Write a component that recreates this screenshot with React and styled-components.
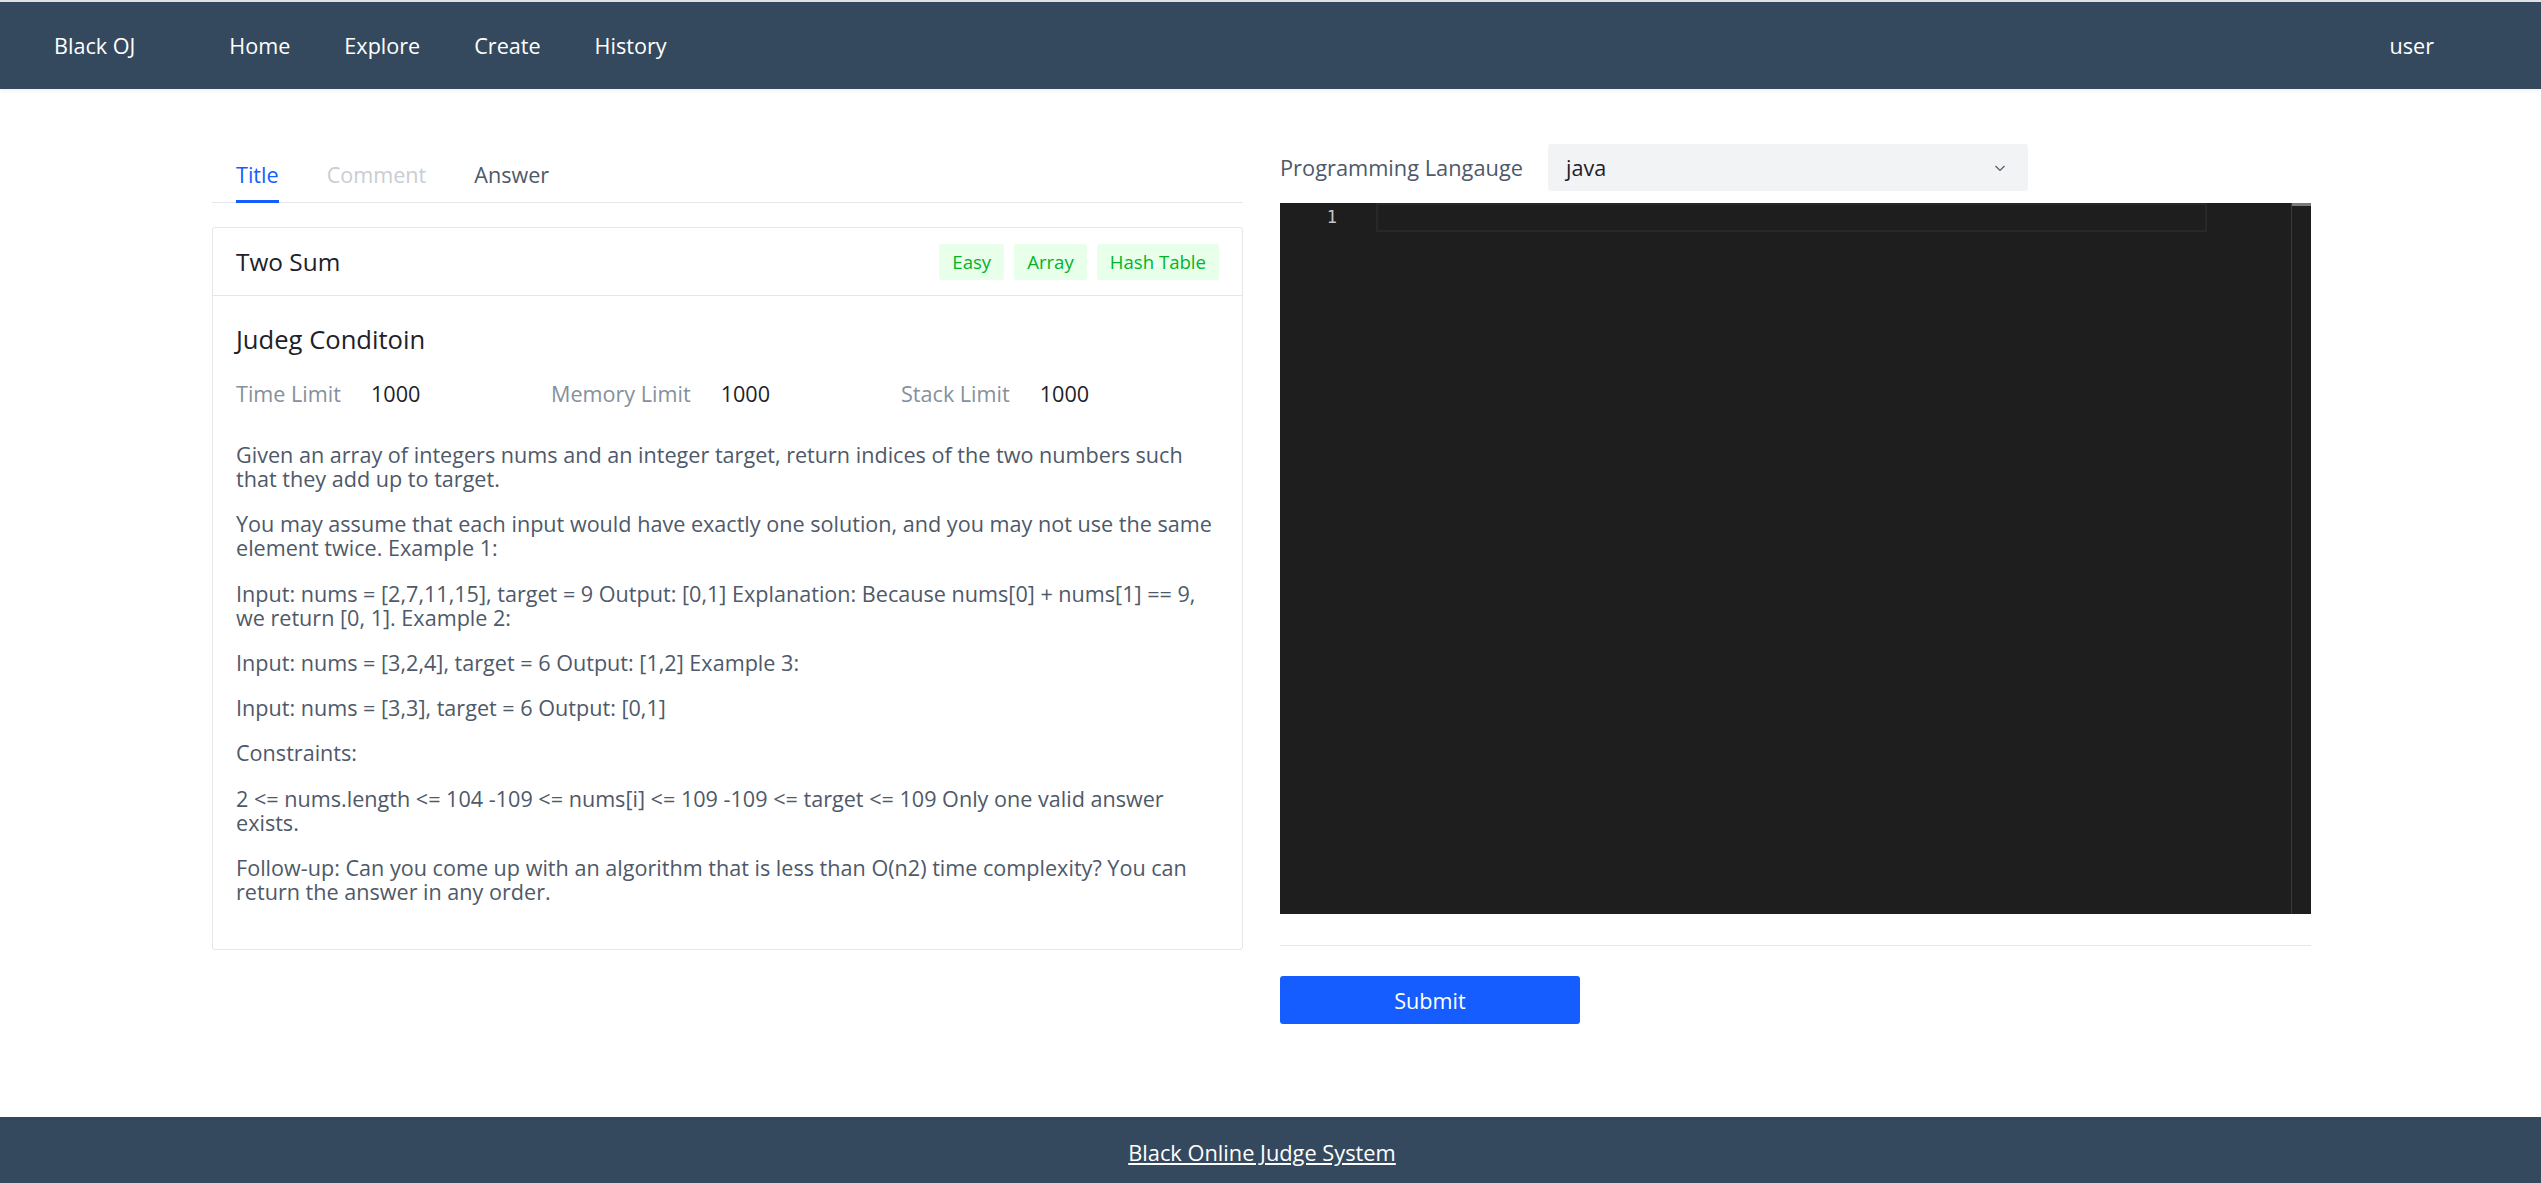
import React from "react"
import styled, { createGlobalStyle } from "styled-components"

const GlobalStyle = createGlobalStyle`
  html, body {
    margin: 0;
    padding: 0;
    background: #fff;
    font-family: "Open Sans", "Noto Sans", sans-serif;
  }
  * {
    box-sizing: border-box;
  }
`

const Page = styled.div`
  min-height: 100vh;
  display: flex;
  flex-direction: column;
`

const Header = styled.header`
  height: 89px;
  border-top: 2px solid #e2e2e2;
  background-color: #34495e;
  box-shadow: 0 2px 3px rgba(0, 0, 0, 0.06);
  display: flex;
  align-items: center;
  padding: 0 107px 0 54px;
  color: #fff;
  font-size: 21.6px;
`

const Brand = styled.div`
  margin-right: 94px;
`

const Nav = styled.nav`
  display: flex;
  gap: 54px;
  flex: 1;
`

const NavItem = styled.span`
  cursor: pointer;
`

const Main = styled.main`
  flex: 1;
  display: grid;
  grid-template-columns: 1031px 1031px;
  gap: 37px;
  padding: 55px 0 0 212px;
`

const LeftCol = styled.section`
  padding-top: 19px;
`

const TabList = styled.div`
  display: flex;
  gap: 48px;
  padding-left: 24px;
  border-bottom: 1px solid #e5e6eb;
`

const Tab = styled.div`
  position: relative;
  font-size: 21.6px;
  line-height: 24px;
  padding-bottom: 15px;
  color: ${(p) => (p.$active ? "#165dff" : p.$disabled ? "#c9cdd4" : "#4e5969")};
  &::after {
    content: "";
    display: ${(p) => (p.$active ? "block" : "none")};
    position: absolute;
    left: 0;
    right: 0;
    bottom: -1px;
    height: 3px;
    background: #165dff;
  }
`

const Card = styled.div`
  margin-top: 24px;
  border: 1px solid #e5e6eb;
  border-radius: 3px;
`

const CardHead = styled.div`
  height: 68px;
  padding: 0 23px;
  display: flex;
  align-items: center;
  justify-content: space-between;
  border-bottom: 1px solid #e5e6eb;
`

const CardTitle = styled.div`
  font-size: 24.4px;
  color: #1d2129;
`

const Tags = styled.div`
  display: flex;
  gap: 10px;
`

const Tag = styled.span`
  height: 36px;
  padding: 0 13px;
  display: flex;
  align-items: center;
  border-radius: 3px;
  background: #e8ffea;
  color: #00b42a;
  font-size: 18.6px;
`

const CardBody = styled.div`
  padding: 25px 16px 24px 23px;
  color: #4e5969;
  font-size: 21.6px;
  line-height: 24px;
`

const Heading = styled.h3`
  margin: 0 0 23px;
  font-size: 25.6px;
  font-weight: 400;
  line-height: 38px;
  color: #1d2129;
`

const Limits = styled.div`
  display: grid;
  grid-template-columns: 315px 350px 1fr;
  margin-bottom: 37px;
`

const LimitItem = styled.div`
  display: flex;
  gap: 30px;
`

const LimitLabel = styled.span`
  color: #86909c;
`

const LimitValue = styled.span`
  color: #1d2129;
`

const Para = styled.p`
  margin: 0 0 21.3px;
`

const RightCol = styled.section`
  display: flex;
  flex-direction: column;
`

const SelectRow = styled.div`
  display: flex;
  align-items: center;
  gap: 25px;
`

const SelectLabel = styled.label`
  font-size: 21.8px;
  color: #4e5969;
`

const Select = styled.div`
  width: 480px;
  height: 47px;
  padding: 0 20px 0 18px;
  display: flex;
  align-items: center;
  justify-content: space-between;
  background: #f2f3f5;
  border-radius: 3px;
  font-size: 21.6px;
  color: #1d2129;
`

const Editor = styled.div`
  margin-top: 12px;
  height: 711px;
  display: flex;
  background: #1e1e1e;
`

const Gutter = styled.div`
  width: 96px;
  padding-right: 39px;
  text-align: right;
  font-family: "DejaVu Sans Mono", "Liberation Mono", monospace;
  font-size: 17px;
  line-height: 29px;
  color: #c6c6c6;
`

const CodeArea = styled.div`
  flex: 1;
  padding-right: 84px;
`

const CurrentLine = styled.div`
  height: 29px;
  border: 2px solid #282828;
`

const Ruler = styled.div`
  width: 20px;
  border-left: 1px solid #3a3a3a;
`

const RulerMark = styled.div`
  height: 3px;
  background: #7a7a7a;
`

const Divider = styled.hr`
  margin: 31px 0 0;
  border: none;
  border-top: 1px solid #e5e6eb;
`

const SubmitBtn = styled.button`
  margin-top: 30px;
  width: 300px;
  height: 48px;
  border: none;
  border-radius: 3px;
  background: #165dff;
  color: #fff;
  font-family: inherit;
  font-size: 21.6px;
  cursor: pointer;
`

const Footer = styled.footer`
  height: 66px;
  padding: 24px 17px 0 0;
  background: #34495e;
  text-align: center;
  line-height: 24px;
`

const FooterLink = styled.a`
  color: #fff;
  font-size: 21.8px;
  text-decoration: underline;
`

const Chevron = () => (
  <svg width="16" height="16" viewBox="0 0 16 16" fill="none">
    <path d="M3.5 6l4.5 4.5 4.5-4.5" stroke="#4e5969" strokeWidth="1.2" />
  </svg>
)

const paragraphs = [
  "Given an array of integers nums and an integer target, return indices of the two numbers such that they add up to target.",
  "You may assume that each input would have exactly one solution, and you may not use the same element twice. Example 1:",
  "Input: nums = [2,7,11,15], target = 9 Output: [0,1] Explanation: Because nums[0] + nums[1] == 9, we return [0, 1]. Example 2:",
  "Input: nums = [3,2,4], target = 6 Output: [1,2] Example 3:",
  "Input: nums = [3,3], target = 6 Output: [0,1]",
  "Constraints:",
  "2 <= nums.length <= 104 -109 <= nums[i] <= 109 -109 <= target <= 109 Only one valid answer exists.",
  "Follow-up: Can you come up with an algorithm that is less than O(n2) time complexity? You can return the answer in any order.",
]

const limits = [
  ["Time Limit", "1000"],
  ["Memory Limit", "1000"],
  ["Stack Limit", "1000"],
]

export default function App() {
  return (
    <Page>
      <GlobalStyle />
      <Header>
        <Brand>Black OJ</Brand>
        <Nav>
          <NavItem>Home</NavItem>
          <NavItem>Explore</NavItem>
          <NavItem>Create</NavItem>
          <NavItem>History</NavItem>
        </Nav>
        <NavItem>user</NavItem>
      </Header>

      <Main>
        <LeftCol>
          <TabList>
            <Tab $active>Title</Tab>
            <Tab $disabled>Comment</Tab>
            <Tab>Answer</Tab>
          </TabList>

          <Card>
            <CardHead>
              <CardTitle>Two Sum</CardTitle>
              <Tags>
                <Tag>Easy</Tag>
                <Tag>Array</Tag>
                <Tag>Hash Table</Tag>
              </Tags>
            </CardHead>
            <CardBody>
              <Heading>Judeg Conditoin</Heading>
              <Limits>
                {limits.map(([label, value]) => (
                  <LimitItem key={label}>
                    <LimitLabel>{label}</LimitLabel>
                    <LimitValue>{value}</LimitValue>
                  </LimitItem>
                ))}
              </Limits>
              {paragraphs.map((text, i) => (
                <Para key={i}>{text}</Para>
              ))}
            </CardBody>
          </Card>
        </LeftCol>

        <RightCol>
          <SelectRow>
            <SelectLabel>Programming Langauge</SelectLabel>
            <Select>
              <span>java</span>
              <Chevron />
            </Select>
          </SelectRow>
          <Editor>
            <Gutter>1</Gutter>
            <CodeArea>
              <CurrentLine />
            </CodeArea>
            <Ruler>
              <RulerMark />
            </Ruler>
          </Editor>
          <Divider />
          <div>
            <SubmitBtn>Submit</SubmitBtn>
          </div>
        </RightCol>
      </Main>

      <Footer>
        <FooterLink>Black Online Judge System</FooterLink>
      </Footer>
    </Page>
  )
}
